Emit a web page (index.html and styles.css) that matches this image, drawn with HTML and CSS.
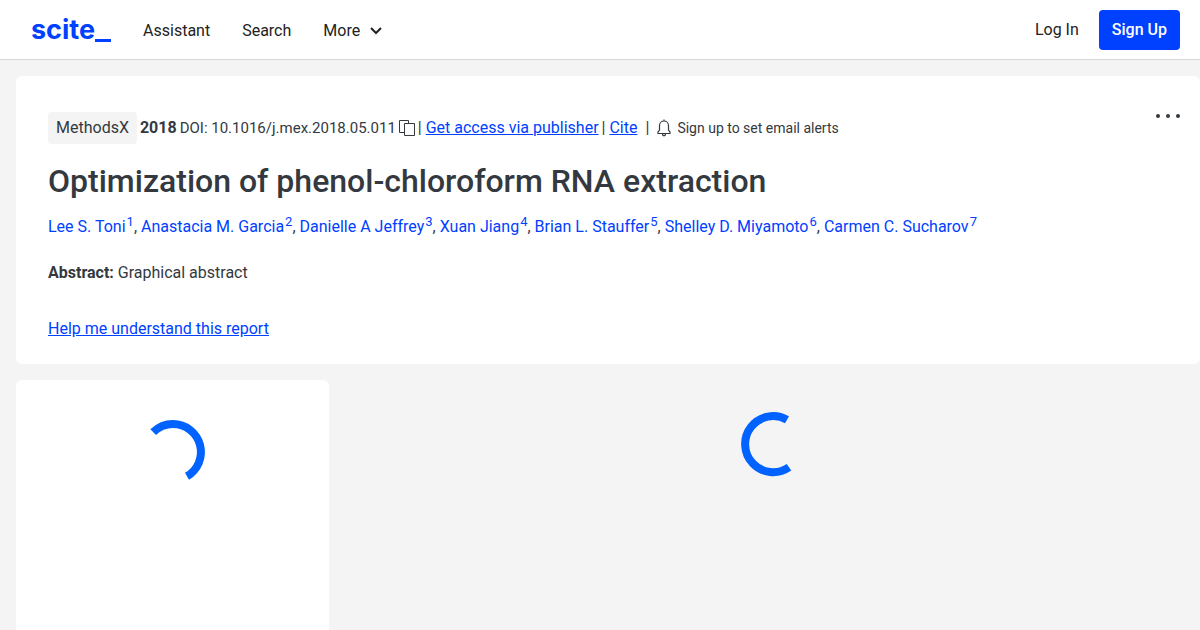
FILE: index.html
```
<!DOCTYPE html>
<html lang="en">

<head>
    <meta charset="UTF-8">
    <meta name="viewport" content="width=device-width, initial-scale=1.0">
    <title>Optimization of phenol-chloroform RNA extraction - scite</title>
    <link rel="stylesheet" href="styles.css">
</head>

<body>
    <header class="header">
        <a class="logo" href="#" aria-label="scite_">scite<span class="logo-bar"></span></a>
        <nav class="nav">
            <a href="#">Assistant</a>
            <a href="#">Search</a>
            <button type="button" class="more">More
                <svg width="12" height="8" viewBox="0 0 12 8"><path d="M1 1l5 5 5-5" fill="none" stroke="currentColor" stroke-width="2"/></svg>
            </button>
        </nav>
        <div class="account">
            <a href="#">Log In</a>
            <button type="button" class="signup">Sign Up</button>
        </div>
    </header>

    <main class="page">
        <section class="card report">
            <button type="button" class="menu" aria-label="Options">
                <svg width="24" height="4" viewBox="0 0 24 4" fill="currentColor"><circle cx="2" cy="2" r="2"/><circle cx="12" cy="2" r="2"/><circle cx="22" cy="2" r="2"/></svg>
            </button>
            <div class="meta">
                <span class="journal">MethodsX</span>
                <strong>2018</strong>
                <span class="doi">DOI: 10.1016/j.mex.2018.05.011</span>
                <button type="button" class="copy" aria-label="Copy DOI">
                    <svg width="16" height="16" viewBox="0 0 16 16" fill="none" stroke="currentColor"><path d="M5 12.5H.5V.5h9V3"/><path d="M5.5 3.5h10v12h-10z"/></svg>
                </button>
                <span>| <a href="#">Get access via publisher</a></span>
                <span>| <a href="#">Cite</a></span>
                <span class="divider">|</span>
                <button type="button" class="alerts">
                    <svg width="14" height="18" viewBox="0 0 14 18" fill="none" stroke="currentColor" stroke-width="1.2"><path d="M7 .5V2M1 14.500h12V13l-1.500-2V6.500C11.500 4 9.500 2 7 2S2.500 4 2.500 6.500V11L1 13zM5.500 14.500c0 3 3 3 3 0"/></svg>
                    Sign up to set email alerts
                </button>
            </div>
            <h1>Optimization of phenol-chloroform RNA extraction</h1>
            <p class="authors"><a href="#">Lee S. Toni<sup>1</sup></a>, <a href="#">Anastacia M. Garcia<sup>2</sup></a>, <a href="#">Danielle A Jeffrey<sup>3</sup></a>, <a href="#">Xuan Jiang<sup>4</sup></a>, <a href="#">Brian L. Stauffer<sup>5</sup></a>, <a href="#">Shelley D. Miyamoto<sup>6</sup></a>, <a href="#">Carmen C. Sucharov<sup>7</sup></a></p>
            <p class="abstract"><strong>Abstract:</strong> Graphical abstract</p>
            <a href="#">Help me understand this report</a>
        </section>

        <div class="columns">
            <aside class="card sidebar">
                <svg width="80" height="80" viewBox="0 0 80 80"><path d="M20.200 20.200A28 28 0 0 1 40 12A28 28 0 0 1 54 64.200" class="arc"/></svg>
            </aside>
            <section class="results">
                <svg width="80" height="80" viewBox="0 0 80 80"><path d="M54 15.800A28 28 0 1 0 56 63.200" class="arc"/></svg>
            </section>
        </div>
    </main>
</body>

</html>
```
FILE: styles.css
```
* {
    box-sizing: border-box;
}

body {
    margin: 0;
    background-color: #f4f4f4;
    font-family: Roboto, 'Liberation Sans', sans-serif;
    font-size: 16px;
    line-height: 24px;
    color: #33393f;
}

a {
    color: #0040ff;
}

button {
    padding: 0;
    border: none;
    background: none;
    font: inherit;
    color: inherit;
    cursor: pointer;
}

.header {
    display: flex;
    align-items: center;
    height: 60px;
    padding: 0 20px 0 31px;
    background-color: #fff;
    border-bottom: 1px solid #d8d8d8;
    color: #222;
}

.logo {
    display: flex;
    align-items: flex-end;
    margin-right: 32px;
    font-family: Inter, sans-serif;
    font-size: 27px;
    font-weight: 700;
    text-decoration: none;
}

.logo-bar {
    width: 16px;
    height: 3px;
    background-color: #0040ff;
}

.nav {
    display: flex;
    gap: 32px;
    padding-top: 2px;
}

.nav a,
.account a {
    color: inherit;
    text-decoration: none;
}

.more {
    display: flex;
    align-items: center;
    gap: 10px;
}

.account {
    display: flex;
    align-items: center;
    gap: 20px;
    margin-left: auto;
}

.signup {
    height: 40px;
    padding: 1px 13px 0;
    border-radius: 4px;
    background-color: #0040ff;
    color: #fff;
    font-weight: 500;
}

.page {
    padding: 16px 0 0 16px;
}

.card {
    background-color: #fff;
    border-radius: 6px;
}

.report {
    position: relative;
    padding: 36px 32px 23px;
}

.menu {
    position: absolute;
    top: 38px;
    right: 20px;
    display: flex;
}

.meta {
    display: flex;
    align-items: center;
    gap: 3px;
}

.journal {
    padding: 4px 8px;
    border-radius: 4px;
    background-color: #f4f4f4;
}

.doi {
    font-size: 15px;
}

.copy {
    display: flex;
}

.divider {
    margin: 0 5px;
}

.alerts {
    display: flex;
    align-items: center;
    gap: 6px;
    font-size: 14px;
}

h1 {
    margin: 17px 0 14px;
    font-size: 32px;
    font-weight: 500;
    line-height: 40px;
}

p {
    margin: 0;
}

.authors a {
    text-decoration: none;
}

sup {
    margin-left: 1px;
    font-size: 13px;
    line-height: 0;
}

.abstract {
    margin: 22px 0 32px;
}

.columns {
    display: flex;
    gap: 16px;
    margin-top: 16px;
}

.sidebar {
    flex: 0 0 313px;
    min-height: 250px;
    padding-top: 32px;
    border-radius: 6px 6px 0 0;
    text-align: center;
}

.results {
    flex: 1;
    padding-top: 24px;
    text-align: center;
}

.arc {
    fill: none;
    stroke: #0062ff;
    stroke-width: 8;
}
```
